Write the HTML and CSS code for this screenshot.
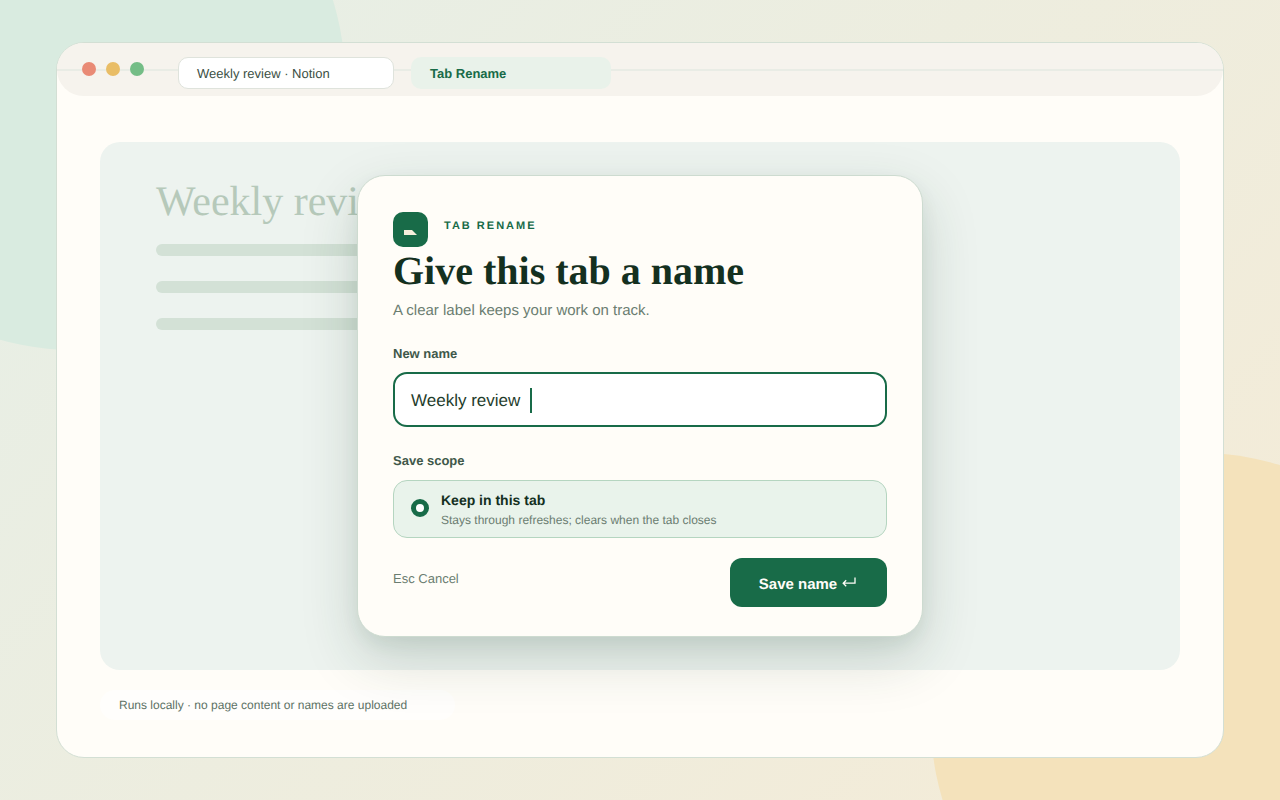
FILE: index.html
```html
<!DOCTYPE html>
<html lang="en">
<head>
<meta charset="utf-8">
<title>Tab Rename</title>
<link rel="stylesheet" href="styles.css">
</head>
<body>
<div class="blob blob-green"></div>
<div class="blob blob-peach"></div>
<main class="window">
  <header class="titlebar">
    <div class="rule"></div>
    <div class="dots"><span class="dot red"></span><span class="dot amber"></span><span class="dot green"></span></div>
    <div class="tab tab-page">Weekly review · Notion</div>
    <div class="tab tab-ext">Tab Rename</div>
  </header>
  <section class="content">
    <div class="page">
      <h2 class="page-title">Weekly review</h2>
      <div class="line"></div>
      <div class="line"></div>
      <div class="line"></div>
    </div>
    <div class="note">Runs locally · no page content or names are uploaded</div>
  </section>
  <div class="modal">
    <div class="brand">
      <div class="logo"><svg width="13" height="6" viewBox="0 0 13 6"><path d="M0 1H8L13 6H0Z" fill="#f6efdc"/></svg></div>
      <div class="eyebrow">TAB RENAME</div>
    </div>
    <h1 class="heading">Give this tab a name</h1>
    <p class="sub">A clear label keeps your work on track.</p>
    <div class="label">New name</div>
    <div class="input"><span>Weekly review</span><i class="caret"></i></div>
    <div class="label label-scope">Save scope</div>
    <div class="option">
      <span class="radio"></span>
      <div class="opt-text">
        <div class="opt-title">Keep in this tab</div>
        <div class="opt-desc">Stays through refreshes; clears when the tab closes</div>
      </div>
    </div>
    <div class="actions">
      <span class="cancel">Esc Cancel</span>
      <button class="save"><span>Save name</span><svg class="enter" width="14" height="11" viewBox="0 0 14 11" fill="none" stroke="#fffdf8" stroke-width="1.3"><path d="M13 0.5V6.2H1.2M4.2 3.2L1.2 6.2L4.2 9.2"/></svg></button>
    </div>
  </div>
</main>
</body>
</html>
```
FILE: styles.css
```css
* { box-sizing: border-box; }
html, body { margin: 0; height: 100%; }
body {
  width: 1280px; height: 800px; overflow: hidden; position: relative;
  padding: 42px 56px;
  background: linear-gradient(135deg, #e6efe7 0%, #f5ebd6 100%);
  font-family: "Liberation Sans", Arial, sans-serif;
  color: #16301f;
  text-rendering: geometricPrecision;
}
.blob { position: absolute; border-radius: 50%; }
.blob-green { left: -197px; top: -190px; width: 542px; height: 540px; background: #d9ebe0; }
.blob-peach { left: 931px; top: 453px; width: 538px; height: 538px; background: #f4e2bb; }
.window {
  position: relative; width: 1168px; height: 716px;
  background: #fffdf8; border: 1px solid #d3dfd4; border-radius: 28px;
  display: flex; flex-direction: column;
}
.titlebar {
  position: relative; height: 53px; flex: none; display: flex; align-items: flex-start;
  background: #f6f3ed; border-radius: 27px; padding: 14px 0 0 25px;
}
.rule { position: absolute; left: 0; right: 0; top: 26px; height: 2px; background: #e9ece5; }
.dots { position: relative; display: flex; gap: 10px; margin-top: 5px; }
.dot { width: 14px; height: 14px; border-radius: 50%; }
.red { background: #e98a75; } .amber { background: #e9bd66; } .green { background: #74bd86; }
.tab { position: relative; height: 32px; display: flex; align-items: center; padding-left: 19px; font-size: 13px; border-radius: 10px; }
.tab-page { width: 216px; margin-left: 34px; background: #fff; border: 1px solid #dfe3dc; padding-left: 18px; color: #3c5044; }
.tab-ext { width: 200px; margin-left: 17px; background: #e9f2ea; color: #186b48; font-weight: 700; }
.content { flex: 1; padding: 46px 43px 0; display: flex; flex-direction: column; align-items: flex-start; }
.page { width: 1080px; height: 528px; background: #edf3ef; border-radius: 20px; padding: 36px 56px; }
.page-title { margin: 0; font: 400 42px/48px "Liberation Serif", serif; color: #b6c9ba; }
.line { width: 760px; height: 12px; border-radius: 6px; background: #d3e1d6; margin-top: 25px; }
.page-title + .line { margin-top: 18px; }
.note { margin-top: 20px; width: 355px; height: 30px; padding-left: 19px; border-radius: 15px; display: flex; align-items: center; font-size: 12px; background: #fffefc; color: #5d7265; }
.modal {
  position: absolute; left: 300px; top: 132px; width: 566px; height: 462px;
  background: #fffdf8; border: 1px solid #cddbd0; border-radius: 28px; padding: 36px 35px;
  box-shadow: 0 22px 56px rgba(26, 60, 42, .18), 0 8px 18px rgba(26, 80, 50, .07);
}
.brand { display: flex; align-items: center; gap: 16px; height: 35px; }
.logo { width: 35px; height: 35px; border-radius: 10px; background: #186b48; display: flex; align-items: center; justify-content: center; padding-top: 4px; }
.eyebrow { font-size: 11px; font-weight: 700; letter-spacing: 2px; color: #186b48; margin-top: -8px; }
.heading { margin: 4px 0 0; font: 700 40px/40px "Liberation Serif", serif; color: #14301f; }
.sub { margin: 10px 0 0; font-size: 15px; line-height: 20px; color: #6b7d71; }
.label { margin-top: 25px; font-size: 13px; line-height: 16px; font-weight: 700; color: #40584a; }
.label-scope { margin-top: 26px; }
.input { margin-top: 10px; height: 55px; border: 2px solid #186b48; border-radius: 14px; background: #fff; display: flex; align-items: center; padding: 2px 0 0 16px; font-size: 17px; color: #1f3d2c; }
.caret { width: 2px; height: 25px; background: #186b48; margin-left: 10px; }
.option { margin-top: 11px; height: 58px; border: 1px solid #b5d5c0; border-radius: 14px; background: #e9f3eb; display: flex; align-items: center; gap: 12px; padding-left: 17px; }
.radio { width: 18px; height: 18px; border-radius: 50%; border: 5px solid #186b48; background: #fff; flex: none; margin-bottom: 2px; }
.opt-text { margin-top: 1px; }
.opt-title { font-size: 14px; line-height: 20px; font-weight: 700; color: #14301f; }
.opt-desc { font-size: 12px; line-height: 20px; color: #6b7d71; }
.actions { margin-top: 20px; display: flex; justify-content: space-between; align-items: flex-start; }
.cancel { font-size: 13px; color: #6b7d71; margin-top: 13px; }
.save { width: 157px; height: 49px; border: 0; padding: 3px 2px 0 0; border-radius: 12px; background: #186b48; color: #fffdf8; font: 700 15px "Liberation Sans", sans-serif; display: flex; align-items: center; justify-content: center; gap: 5px; text-rendering: geometricPrecision; }
.enter { margin-top: -4px; }
```
